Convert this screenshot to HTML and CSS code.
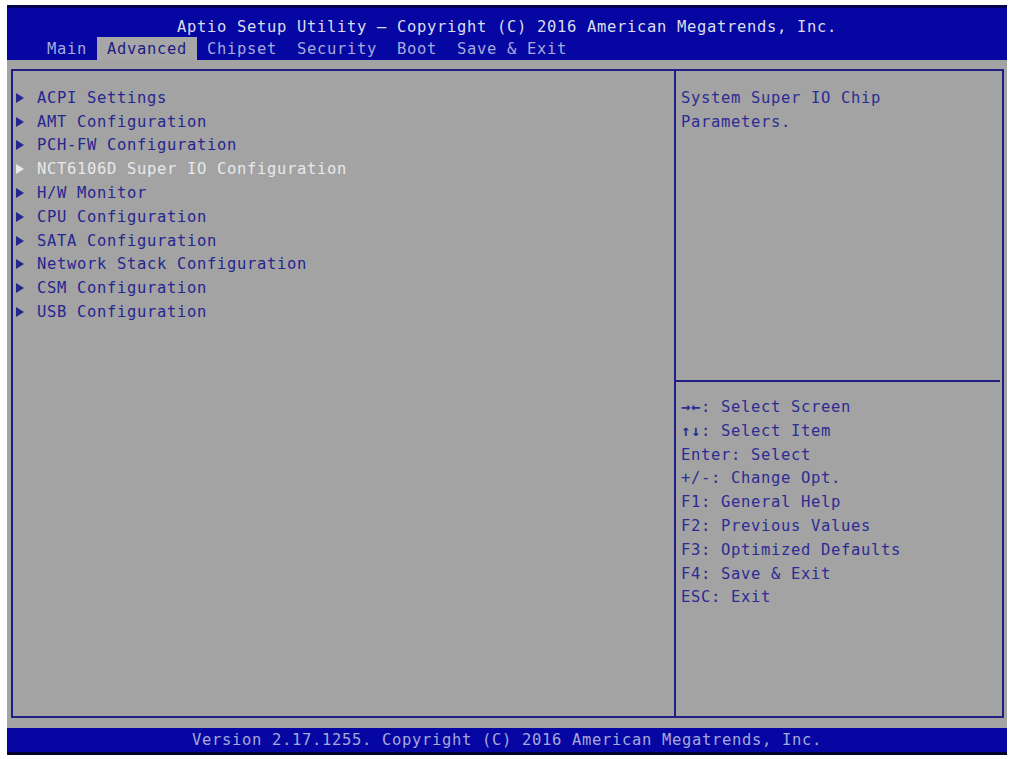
FILE: index.html
```html
<!DOCTYPE html>
<html>
<head>
<meta charset="utf-8">
<link rel="stylesheet" href="styles.css">
</head>
<body>
<div class="screen">
  <div class="topbar">
    <div class="title">Aptio Setup Utility – Copyright (C) 2016 American Megatrends, Inc.</div>
    <div class="menu">
      <span class="tab">Main</span>
      <span class="tab active">Advanced</span>
      <span class="tab">Chipset</span>
      <span class="tab">Security</span>
      <span class="tab">Boot</span>
      <span class="tab">Save &amp; Exit</span>
    </div>
  </div>
  <div class="main">
    <div class="box">
      <div class="left">
        <div class="item"><span class="arrow"></span><span class="label">ACPI Settings</span></div>
        <div class="item"><span class="arrow"></span><span class="label">AMT Configuration</span></div>
        <div class="item"><span class="arrow"></span><span class="label">PCH-FW Configuration</span></div>
        <div class="item selected"><span class="arrow"></span><span class="label">NCT6106D Super IO Configuration</span></div>
        <div class="item"><span class="arrow"></span><span class="label">H/W Monitor</span></div>
        <div class="item"><span class="arrow"></span><span class="label">CPU Configuration</span></div>
        <div class="item"><span class="arrow"></span><span class="label">SATA Configuration</span></div>
        <div class="item"><span class="arrow"></span><span class="label">Network Stack Configuration</span></div>
        <div class="item"><span class="arrow"></span><span class="label">CSM Configuration</span></div>
        <div class="item"><span class="arrow"></span><span class="label">USB Configuration</span></div>
      </div>
      <div class="right">
        <div class="help">
          <div class="line">System Super IO Chip</div>
          <div class="line">Parameters.</div>
        </div>
        <div class="keys">
          <div class="line"><span class="sym">→←</span>: Select Screen</div>
          <div class="line"><span class="sym">↑↓</span>: Select Item</div>
          <div class="line">Enter: Select</div>
          <div class="line">+/-: Change Opt.</div>
          <div class="line">F1: General Help</div>
          <div class="line">F2: Previous Values</div>
          <div class="line">F3: Optimized Defaults</div>
          <div class="line">F4: Save &amp; Exit</div>
          <div class="line">ESC: Exit</div>
        </div>
      </div>
    </div>
  </div>
  <div class="bottombar">Version 2.17.1255. Copyright (C) 2016 American Megatrends, Inc.</div>
</div>
</body>
</html>
```
FILE: styles.css
```css
html, body {
  margin: 0;
  padding: 0;
  background: #ffffff;
}

.screen {
  width: 1000px;
  margin: 5px 0 0 7px;
  font-family: "DejaVu Sans Mono", "Liberation Mono", monospace;
  font-size: 15.5px;
  letter-spacing: 0.67px;
  white-space: nowrap;
}

.topbar {
  background: #0606a2;
  border-top: 3px solid #020250;
  height: 52px;
  display: flex;
  flex-direction: column;
}

.title {
  margin-top: 7px;
  height: 22px;
  line-height: 24px;
  text-align: center;
  color: #dcdcec;
}

.menu {
  height: 23px;
  line-height: 24px;
  display: flex;
  padding-left: 30px;
}

.tab {
  padding: 0 10px;
  color: #a6aadc;
}

.tab.active {
  background: #a6a6a6;
  color: #1c1c86;
}

.main {
  background: #a3a3a3;
  height: 668px;
  padding: 9px 3px 10px 4px;
  box-sizing: border-box;
}

.box {
  height: 649px;
  border: 2px solid #1e1e84;
  box-sizing: border-box;
  display: flex;
}

.left {
  width: 661px;
  border-right: 2px solid #1e1e84;
  padding-top: 15px;
}

.item {
  display: flex;
  align-items: center;
  height: 23.8px;
  color: #262690;
}

.item.selected {
  color: #e8e8ea;
}

.arrow {
  width: 0;
  height: 0;
  margin-left: 3px;
  border-top: 5px solid transparent;
  border-bottom: 5px solid transparent;
  border-left: 8px solid #262690;
}

.item.selected .arrow {
  border-left-color: #e8e8ea;
}

.label {
  margin-left: 13px;
}

.right {
  flex: 1;
  display: flex;
  flex-direction: column;
  color: #2c2c94;
}

.help {
  padding: 16px 0 0 5px;
  height: 311px;
  box-sizing: border-box;
  border-bottom: 2px solid #1e1e84;
  margin-right: 2px;
}

.keys {
  padding: 14px 0 0 5px;
}

.line {
  height: 23.8px;
  line-height: 23.8px;
}

.sym {
  font-weight: bold;
}

.bottombar {
  background: #0606a2;
  height: 24px;
  line-height: 25px;
  text-align: center;
  color: #a4a8da;
  border-bottom: 3px solid #02022a;
}
```
